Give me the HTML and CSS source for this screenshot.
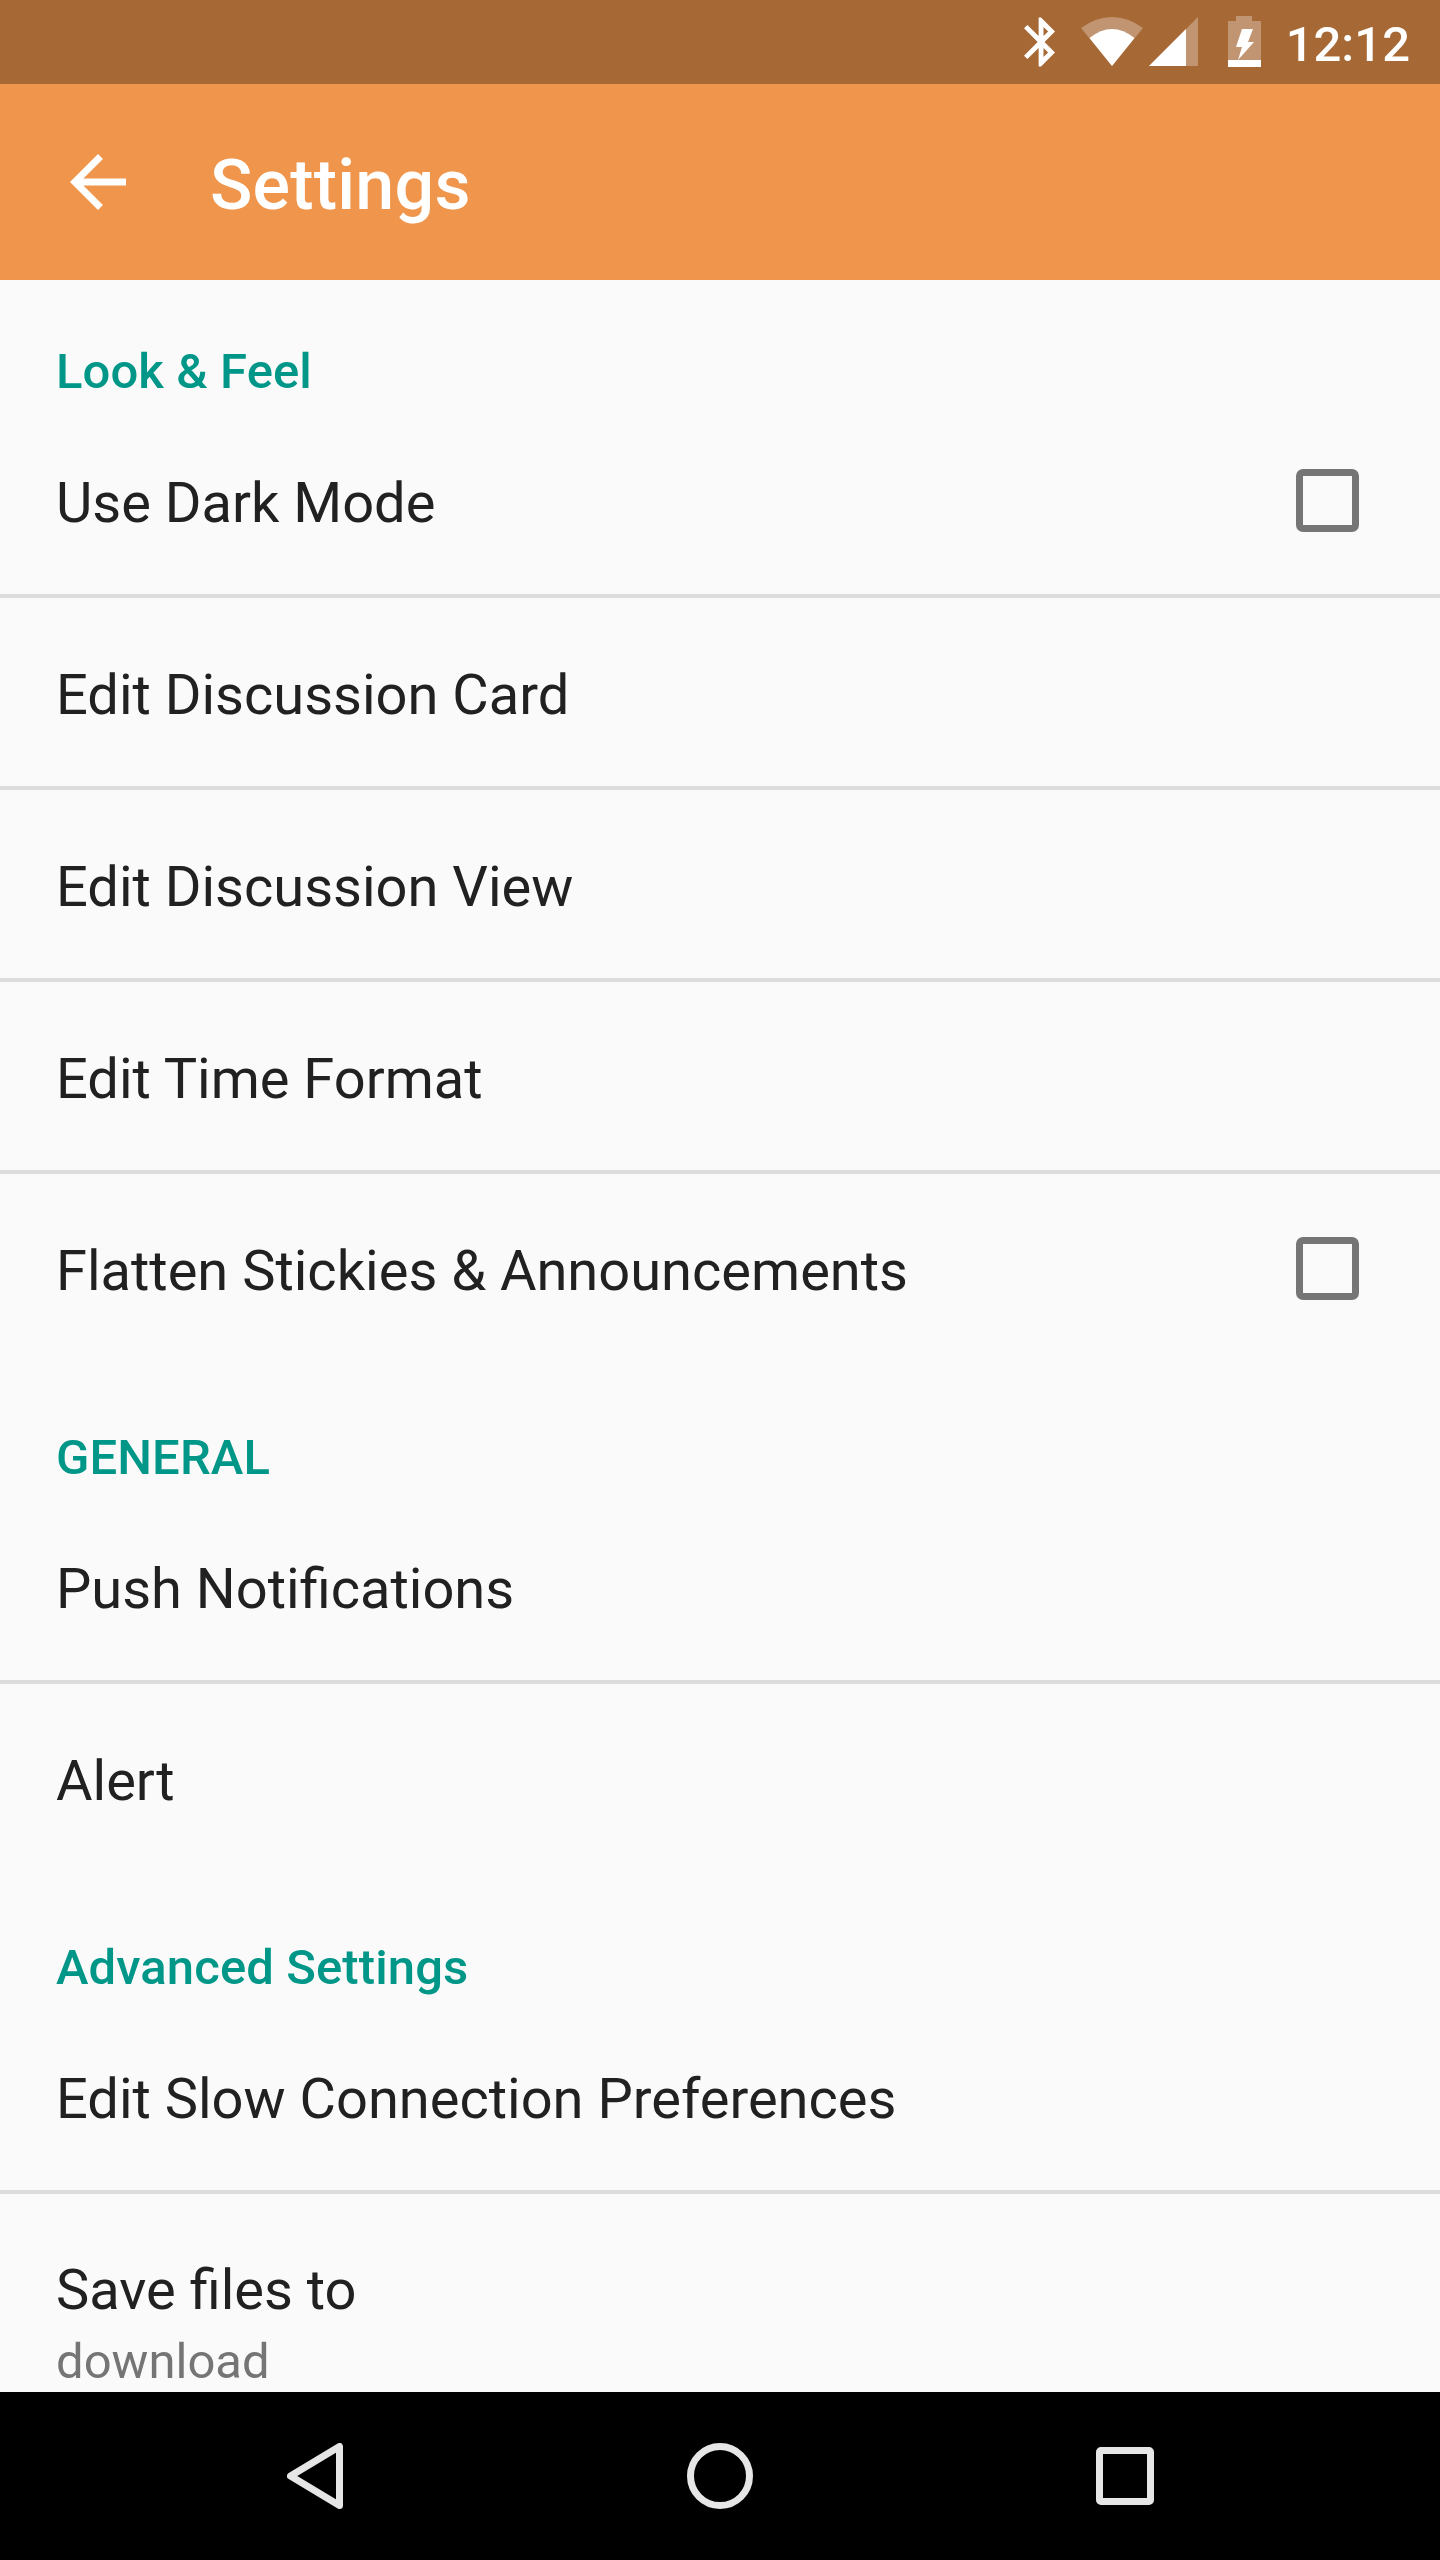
FILE: index.html
```html
<!DOCTYPE html>
<html lang="en">
<head>
    <meta charset="UTF-8">
    <meta name="viewport" content="width=device-width, initial-scale=1.0">
    <title>Settings</title>
    <link rel="stylesheet" href="styles.css">
</head>
<body>
    <div class="status-bar">
        <svg class="ic-bluetooth" width="31" height="50" viewBox="5 2 12.71 20"><path fill="#fff" d="M17.71 7.71L12 2h-1v7.59L6.41 5 5 6.41 10.59 12 5 17.59 6.41 19 11 14.41V22h1l5.71-5.71-4.3-4.29 4.3-4.29zM13 5.83l1.88 1.88L13 9.59V5.83zm1.88 10.46L13 18.17v-3.76l1.88 1.88z"/></svg>
        <svg class="ic-wifi" width="62" height="49" viewBox="0 0 62 49"><path fill="#fff" fill-opacity=".3" d="M0 11Q31 -11 62 11L31 49Z"/><path fill="#fff" d="M8.5 21Q31 3 53.500 21L31 49Z"/></svg>
        <svg class="ic-signal" width="49" height="49" viewBox="0 0 49 49"><path fill="#fff" fill-opacity=".3" d="M0 49L49 0V49Z"/><path fill="#fff" d="M0 49L37 12V49Z"/></svg>
        <svg class="ic-battery" width="33" height="51" viewBox="0 0 33 51"><path fill="#fff" fill-opacity=".3" d="M8 0H24V5H33V44H0V5H8Z"/><path fill="#fff" d="M0 44H33V51H0ZM14 13H25L20 26H26L10 44L14 31H8Z"/></svg>
        <span class="clock">12:12</span>
    </div>

    <header class="toolbar">
        <svg class="ic-back" width="56" height="56" viewBox="4 4 16 16"><path fill="#fff" d="M20 11H7.830l5.590-5.590L12 4l-8 8 8 8 1.410-1.410L7.830 13H20v-2z"/></svg>
        <h1>Settings</h1>
    </header>

    <main class="settings">
        <h2 class="section-title">Look &amp; Feel</h2>
        <div class="row line"><span>Use Dark Mode</span><i class="checkbox"></i></div>
        <div class="row line"><span>Edit Discussion Card</span></div>
        <div class="row line"><span>Edit Discussion View</span></div>
        <div class="row line"><span>Edit Time Format</span></div>
        <div class="row"><span>Flatten Stickies &amp; Announcements</span><i class="checkbox"></i></div>

        <h2 class="section-title">GENERAL</h2>
        <div class="row line"><span>Push Notifications</span></div>
        <div class="row"><span>Alert</span></div>

        <h2 class="section-title">Advanced Settings</h2>
        <div class="row line"><span>Edit Slow Connection Preferences</span></div>
        <div class="row two-line">
            <span>Save files to</span>
            <small>download</small>
        </div>
    </main>

    <nav class="nav-bar">
        <svg width="56" height="66" viewBox="0 0 56 66"><path fill="none" stroke="#e6e6e6" stroke-width="7" stroke-linejoin="round" d="M52.500 3.500V62.500L3.500 33Z"/></svg>
        <svg width="66" height="66" viewBox="0 0 66 66"><circle cx="33" cy="33" r="29.500" fill="none" stroke="#e6e6e6" stroke-width="7"/></svg>
        <svg width="58" height="58" viewBox="0 0 58 58"><rect x="3.500" y="3.500" width="51" height="51" rx="1.500" fill="none" stroke="#e6e6e6" stroke-width="7"/></svg>
    </nav>
</body>
</html>
```

FILE: styles.css
```css
/* page */
html, body {
    margin: 0;
    height: 2560px;
    overflow: hidden;
}

body {
    display: flex;
    flex-direction: column;
    font-family: Roboto, "Liberation Sans", sans-serif;
    background-color: #fafafa;
    color: #212121;
}

/* status bar */
.status-bar {
    flex: 0 0 84px;
    display: flex;
    align-items: flex-start;
    padding: 16px 30px 0 0;
    box-sizing: border-box;
    background-color: #a66835;
    color: #fff;
}

.status-bar svg {
    display: block;
}

.ic-bluetooth {
    margin: 1px 0 0 auto;
}

.ic-wifi {
    margin: 1px 0 0 26px;
}

.ic-signal {
    margin: 1px 0 0 6px;
}

.ic-battery {
    margin-left: 30px;
}

.clock {
    margin-left: 25px;
    font-size: 49px;
    font-weight: 500;
    line-height: 58px;
}

/* toolbar */
.toolbar {
    flex: 0 0 196px;
    display: flex;
    align-items: center;
    padding-left: 70px;
    background-color: #ef964c;
}

.toolbar h1 {
    margin: 6px 0 0 84px;
    font-size: 70px;
    font-weight: 500;
    letter-spacing: 0.2px;
    color: #fff;
}

/* list */
.settings {
    flex: 1;
    min-height: 0;
    overflow: hidden;
}

.section-title {
    height: 126px;
    margin: 0;
    padding: 69px 0 0 56px;
    box-sizing: border-box;
    font-size: 49px;
    line-height: 46px;
    font-weight: 500;
    letter-spacing: 0.1px;
    color: #009688;
}

.row {
    display: flex;
    align-items: center;
    justify-content: space-between;
    height: 192px;
    padding: 0 81px 0 56px;
    box-sizing: border-box;
    border-bottom: 4px solid transparent;
    font-size: 56px;
}

.row span {
    padding-top: 6px;
}

.line {
    border-bottom-color: #dcdcdc;
}

.checkbox {
    width: 63px;
    height: 63px;
    box-sizing: border-box;
    border: 7px solid #757575;
    border-radius: 7px;
}

.two-line {
    flex-direction: column;
    align-items: flex-start;
    justify-content: flex-start;
    padding-top: 57px;
    height: auto;
}

.two-line span {
    line-height: 66px;
}

.two-line small {
    margin-top: 10px;
    font-size: 49px;
    line-height: 58px;
    color: #757575;
}

/* nav bar */
.nav-bar {
    flex: 0 0 168px;
    display: grid;
    grid-template-columns: repeat(3, 405px);
    justify-content: center;
    justify-items: center;
    align-items: center;
    background-color: #000;
}

.nav-bar svg {
    display: block;
}
```
